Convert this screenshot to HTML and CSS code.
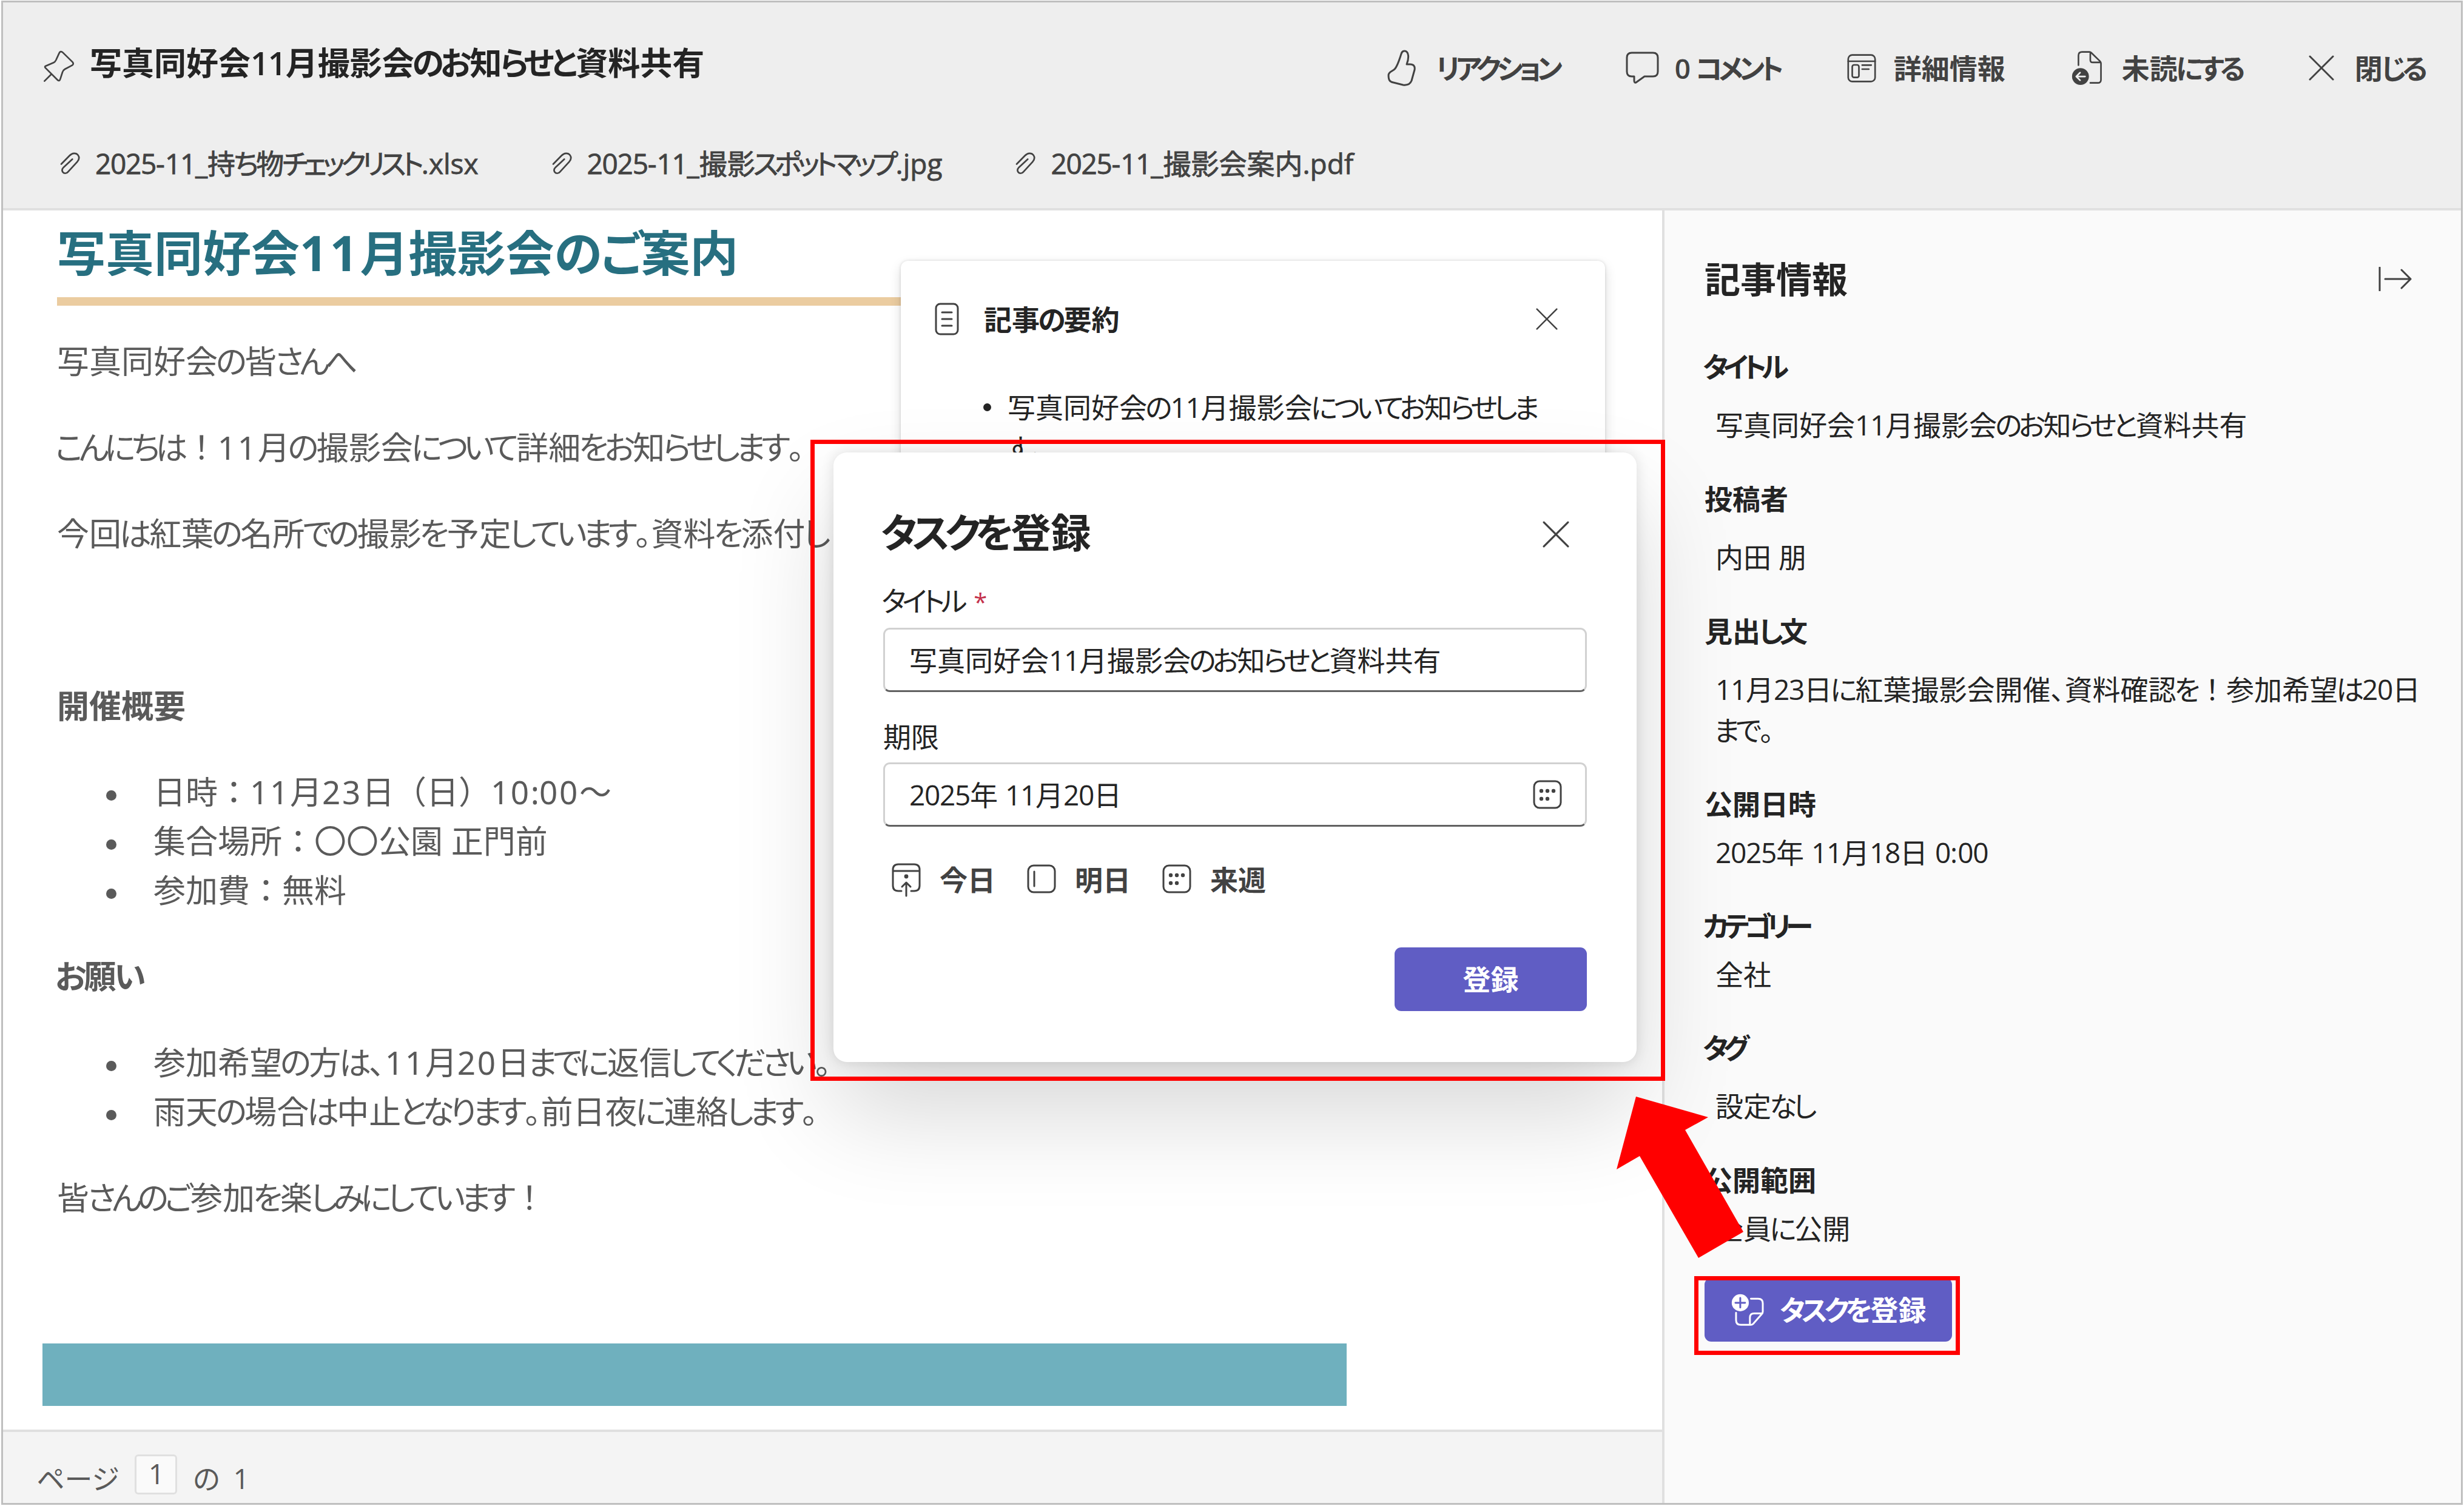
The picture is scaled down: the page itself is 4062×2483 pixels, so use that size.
FILE: index.html
```html
<!DOCTYPE html>
<html lang="ja">
<head>
    <meta charset="UTF-8">
    <meta name="viewport" content="width=device-width, initial-scale=1.0">
    <title>写真同好会11月撮影会のお知らせと資料共有</title>
    <link rel="stylesheet" href="styles.css">
</head>
<body>
    <!-- shared icons -->
    <svg class="icon-defs">
        <symbol id="clip" viewBox="118 540 98 110">
            <path d="M124 598 L164 557 C178 542 197 542 206 554 C214 565 211 577 202 587 L157 636 C149 646 137 645 131 637 C126 629 128 621 135 614 L178 574"/>
        </symbol>
        <symbol id="close" viewBox="0 0 42 42">
            <path d="M2 2 L40 40 M40 2 L2 40"/>
        </symbol>
        <symbol id="calendar" viewBox="0 0 48 48">
            <rect x="2" y="2" width="44" height="44" rx="9"/>
            <g class="dots"><circle cx="14" cy="18" r="3.2"/><circle cx="24" cy="18" r="3.2"/><circle cx="34" cy="18" r="3.2"/><circle cx="14" cy="31" r="3.2"/><circle cx="24" cy="31" r="3.2"/></g>
        </symbol>
    </svg>

    <div class="app">
        <header class="header">
            <div class="top-row">
                <svg class="icon pin" viewBox="36 38 156 156"><path d="M40 190 L75 155 M45 116 L85 99 C92 96 94 92 97 86 L113 51 C116 43 124 42 130 48 L179 96 C184 102 183 108 177 112 L141 131 C134 135 131 139 129 146 L118 180 C116 189 110 190 105 185 L46 126 C41 122 41 118 45 116 Z"/></svg>
                <h1 class="title">写真同好会11月撮影会のお知らせと資料共有</h1>
                <nav class="toolbar">
                    <button class="tool">
                        <svg class="icon like" viewBox="0 0 48 60"><path d="M28 2 C23 2 23 8 21 13 C18 22 16 27 13 31 C9 36 2 36 2 42 C2 50 4 53 10 54 L26 58 C34 59 38 56 40 51 L45 33 C46 27 43 24 38 24 H32 C36 14 36 2 28 2 Z"/></svg>
                        リアクション
                    </button>
                    <button class="tool">
                        <svg class="icon comment" viewBox="0 0 55 54"><path d="M10 2 H45 Q53 2 53 10 V33 Q53 41 45 41 H31 L17 51 Q14 52 14 48 V41 H10 Q2 41 2 33 V10 Q2 2 10 2 Z"/></svg>
                        0 コメント
                    </button>
                    <button class="tool">
                        <svg class="icon detail" viewBox="66 53 143 141"><rect x="71" y="58" width="133" height="131" rx="20"/><path d="M71 89 H204 M140 108 H185 M140 128 H173"/><rect x="91" y="107" width="33" height="62" rx="9"/></svg>
                        詳細情報
                    </button>
                    <button class="tool">
                        <svg class="icon unread" viewBox="1166 38 156 178"><path d="M1203 112 V64 Q1203 46 1221 46 H1258 Q1263 46 1267 50 L1310 92 Q1315 97 1315 102 V184 Q1315 200 1299 200 H1262 M1262 48 V86 Q1262 98 1274 98 H1313"/><circle class="solid" cx="1213" cy="168" r="44"/><path class="cut" d="M1236 168 H1194 M1211 149 L1192 168 L1211 187"/></svg>
                        未読にする
                    </button>
                    <button class="tool">
                        <svg class="icon close"><use href="#close"/></svg>
                        閉じる
                    </button>
                </nav>
            </div>
            <div class="files">
                <a class="file"><svg class="icon clip"><use href="#clip"/></svg>2025-11_持ち物チェックリスト.xlsx</a>
                <a class="file"><svg class="icon clip"><use href="#clip"/></svg>2025-11_撮影スポットマップ.jpg</a>
                <a class="file"><svg class="icon clip"><use href="#clip"/></svg>2025-11_撮影会案内.pdf</a>
            </div>
        </header>

        <div class="content">
            <main class="viewer">
                <article class="article">
                    <h2>写真同好会11月撮影会のご案内</h2>
                    <p>写真同好会の皆さんへ</p>
                    <p>こんにちは！11月の撮影会について詳細をお知らせします。</p>
                    <p>今回は紅葉の名所での撮影を予定しています。資料を添付し</p>
                    <p>&nbsp;</p>
                    <h3>開催概要</h3>
                    <ul>
                        <li>日時：11月23日（日）10:00～</li>
                        <li>集合場所：〇〇公園 正門前</li>
                        <li>参加費：無料</li>
                    </ul>
                    <h3>お願い</h3>
                    <ul>
                        <li>参加希望の方は、11月20日までに返信してください。</li>
                        <li>雨天の場合は中止となります。前日夜に連絡します。</li>
                    </ul>
                    <p>皆さんのご参加を楽しみにしています！</p>
                    <div class="band"></div>
                </article>
                <footer class="pager">
                    <span class="pager-label">ページ</span>
                    <span class="page-box">1</span>
                    <span>の</span>
                    <span class="page-total">1</span>
                </footer>
            </main>

            <aside class="sidebar">
                <div class="sidebar-head">
                    <h2>記事情報</h2>
                    <svg class="icon collapse" viewBox="0 0 56 40"><path d="M2 1 V39 M11 20 H53 M38 5 L53 20 L38 35"/></svg>
                </div>
                <dl>
                    <dt>タイトル</dt>
                    <dd class="loose">写真同好会11月撮影会のお知らせと資料共有</dd>
                    <dt>投稿者</dt>
                    <dd class="loose">内田 朋</dd>
                    <dt>見出し文</dt>
                    <dd class="loose">11月23日に紅葉撮影会開催、資料確認を！参加希望は20日<br>まで。</dd>
                    <dt>公開日時</dt>
                    <dd>2025年 11月18日 0:00</dd>
                    <dt>カテゴリー</dt>
                    <dd>全社</dd>
                    <dt>タグ</dt>
                    <dd class="loose">設定なし</dd>
                    <dt>公開範囲</dt>
                    <dd>全員に公開</dd>
                </dl>
                <button class="primary add-task">
                    <svg class="icon note" viewBox="44 64 166 166"><path d="M145 92 H181 Q204 92 204 115 V156 Q204 163 199 168 L156 217 Q151 222 144 222 H95 Q71 222 71 198 V162 M140 220 V186 Q140 165 161 165 H202"/><circle class="solid" cx="92" cy="112" r="45"/><path class="cut" d="M92 88 V136 M68 112 H116"/></svg>
                    タスクを登録
                </button>
            </aside>
        </div>

        <section class="summary">
            <div class="summary-head">
                <svg class="icon doc" viewBox="0 0 40 54"><rect x="2" y="2" width="36" height="50" rx="7"/><path d="M12 16 H28 M12 27 H28 M12 38 H28"/></svg>
                <h2>記事の要約</h2>
                <svg class="icon close"><use href="#close"/></svg>
            </div>
            <ul>
                <li>写真同好会の11月撮影会についてお知らせしま<br>す。</li>
            </ul>
        </section>

        <section class="dialog">
            <div class="dialog-head">
                <h2>タスクを登録</h2>
                <svg class="icon close"><use href="#close"/></svg>
            </div>
            <label class="label">タイトル<span class="required">*</span></label>
            <div class="input">写真同好会11月撮影会のお知らせと資料共有</div>
            <label class="label due">期限</label>
            <div class="input">2025年 11月20日<svg class="icon cal"><use href="#calendar"/></svg></div>
            <div class="quick">
                <button><svg class="icon today" viewBox="0 0 48 56"><path d="M16 46 H11 Q2 46 2 37 V11 Q2 2 11 2 H37 Q46 2 46 11 V37 Q46 46 37 46 H32 M2 13 H46 M24 54 V33 M17 39 L24 32 L31 39"/><g class="dots"><circle cx="24" cy="22" r="3.4"/></g></svg>今日</button>
                <button><svg class="icon cal" viewBox="0 0 48 48"><rect x="2" y="2" width="44" height="44" rx="9"/><path d="M12 12 V36"/></svg>明日</button>
                <button><svg class="icon cal"><use href="#calendar"/></svg>来週</button>
            </div>
            <button class="primary submit">登録</button>
        </section>

        <!-- callouts -->
        <div class="mark mark-dialog"></div>
        <div class="mark mark-button"></div>
        <svg class="arrow" viewBox="0 0 151 266"><polygon points="32,0 151,34 113,55 209,223 135,266 38,98 0,120"/></svg>
    </div>

    <script>
        // tighten kana and digits, keep full-width punctuation square
        const kinds = [
            [/^[ぁ-んァ-ヶー]+$/, 'kana'],
            [/^[0-9]+$/, 'num'],
            [/^[！：（）]+$/, 'full']
        ];
        const walker = document.createTreeWalker(document.querySelector('.app'), NodeFilter.SHOW_TEXT);
        const nodes = [];
        while (walker.nextNode()) {
            if (walker.currentNode.data.trim()) nodes.push(walker.currentNode);
        }

        nodes.forEach(node => {
            const run = document.createElement('span');
            node.data.trim().split(/([ぁ-んァ-ヶー]+|[0-9]+|[！：（）]+)/).forEach(part => {
                const kind = kinds.find(k => k[0].test(part));
                if (kind) {
                    const span = document.createElement('span');
                    span.className = kind[1];
                    span.textContent = part;
                    run.append(span);
                } else {
                    run.append(part);
                }
            });
            node.replaceWith(run);
        });
    </script>
</body>
</html>
```
FILE: styles.css
```css
* {
    box-sizing: border-box;
    margin: 0;
    padding: 0;
}

body {
    background: #fff;
    font-family: "Open Sans", "Noto Sans CJK JP", sans-serif;
    font-size: 46px;
    line-height: 67px;
    color: #242424;
    font-feature-settings: "palt";
    white-space: nowrap;
    overflow: hidden;
}

button {
    font: inherit;
    font-feature-settings: inherit;
    color: inherit;
    background: none;
    border: none;
    display: flex;
    align-items: center;
}

.kana {
    margin: 0 0.06em 0 -0.06em;
    letter-spacing: -0.13em;
}

.num { letter-spacing: -0.028em; }
.full { font-feature-settings: normal; }

.icon-defs {
    position: absolute;
    width: 0;
    height: 0;
}

.icon {
    flex: none;
    fill: none;
    stroke: #424242;
    stroke-width: 3;
    stroke-linecap: round;
    stroke-linejoin: round;
}

.dots {
    fill: #424242;
    stroke: none;
}

.app {
    position: relative;
    display: flex;
    flex-direction: column;
    width: 4058px;
    height: 2480px;
    margin: 1px 2px;
    border: 3px solid #bfbfbf;
    overflow: hidden;
}

/* header */
.header {
    height: 343px;
    background: #eee;
    border-bottom: 4px solid #e0e0e0;
}

.top-row {
    display: flex;
    align-items: flex-start;
    padding: 60px 59px 0 67px;
    line-height: 80px;
}

.pin {
    width: 52px;
    height: 52px;
    margin: 19px 24px 0 0;
    stroke-width: 8;
}

.title {
    font-size: 53px;
    font-weight: 600;
}

.title .kana { letter-spacing: -0.11em; }

.toolbar {
    display: flex;
    gap: 108px;
    margin: 8px 0 0 auto;
    font-weight: 600;
    color: #424242;
}

.toolbar .kana { letter-spacing: -0.15em; }

.like { width: 48px; height: 60px; margin-right: 35px; }
.comment { width: 55px; height: 54px; margin-right: 26px; }
.detail { width: 48px; height: 47px; margin-right: 29px; stroke-width: 8; }
.unread { width: 52px; height: 59px; margin-right: 32px; stroke-width: 8; }
.tool .close { width: 42px; height: 42px; margin-right: 34px; }

.unread .solid { fill: #424242; stroke: #eee; stroke-width: 4; }
.unread .cut { stroke: #eee; }

.files {
    display: flex;
    gap: 121px;
    padding: 87px 0 0 94px;
    line-height: 60px;
    color: #424242;
    -webkit-text-stroke: 0.8px #424242;
}

.file {
    display: flex;
    align-items: center;
}

.file .kana { letter-spacing: -0.14em; }

.clip {
    width: 33px;
    height: 37px;
    margin-right: 25px;
    stroke-width: 8;
}

/* body */
.content {
    display: flex;
    flex: 1;
}

.viewer {
    display: flex;
    flex-direction: column;
    width: 2739px;
    border-right: 4px solid #e0e0e0;
}

.article {
    flex: 1;
    padding: 19px 546px 0 89px;
    font-family: "Noto Sans", "Noto Sans CJK JP", sans-serif;
    font-size: 53px;
    line-height: 81px;
    color: #5a5a5a;
}

.article .num { letter-spacing: 0.05em; }
.article h2 .kana { letter-spacing: -0.03em; margin: 0; }

.article h2 {
    padding: 0 0 24px;
    border-bottom: 14px solid #ebcca0;
    margin-bottom: 51px;
    font-size: 80px;
    line-height: 100px;
    color: #276f80;
}

.article p,
.article h3,
.article ul {
    margin: 0 0 61px;
    font-size: 53px;
}

.article li {
    display: flex;
    align-items: center;
    padding-left: 81px;
}

.article li::before {
    content: "";
    width: 17px;
    height: 17px;
    margin: 12px 61px 0 0;
    border-radius: 50%;
    background: #5a5a5a;
}

.band {
    width: 2150px;
    height: 103px;
    margin: 200px 0 0 -24px;
    background: #6fb0be;
}

.pager {
    display: flex;
    align-items: center;
    height: 121px;
    padding: 36px 0 0 55px;
    background: #f4f4f4;
    border-top: 4px solid #e0e0e0;
    color: #5a5a5a;
}

.pager .kana { letter-spacing: 0; margin: 0; }

.page-box {
    width: 70px;
    height: 66px;
    margin: -14px 26px 0 26px;
    border: 3px solid #e0e0e0;
    border-radius: 6px;
    background: #fafafa;
    line-height: 56px;
    text-align: center;
}

.page-total { margin-left: 22px; }

/* sidebar */
.sidebar {
    flex: 1;
    padding: 71px 77px 0 66px;
    background: #fafafa;
}

.sidebar-head {
    display: flex;
    align-items: center;
    justify-content: space-between;
    height: 84px;
    padding-right: 13px;
}

.sidebar-head h2 { font-size: 59px; }
.collapse { width: 56px; height: 40px; }

dl { padding-top: 15px; }

dt {
    margin-top: 54px;
    font-weight: 600;
}

dt .kana { letter-spacing: -0.18em; }

dd { margin: 13px 0 0 18px; }
dd.loose { margin-top: 29px; }
dd.loose + dt { margin-top: 55px; }

.primary {
    justify-content: center;
    height: 105px;
    border-radius: 11px;
    background: #605dc4;
    color: #fff;
    font-weight: 600;
}

.add-task {
    width: 408px;
    margin-top: 48px;
}

.note {
    width: 55px;
    height: 55px;
    margin-right: 29px;
    stroke: #fff;
    stroke-width: 9;
}

.note .solid { fill: #fff; stroke: #605dc4; stroke-width: 5; }
.note .cut { stroke: #605dc4; }

/* summary card */
.summary {
    position: absolute;
    left: 1480px;
    top: 426px;
    width: 1161px;
    height: 700px;
    padding: 54px 78px 0 56px;
    border-radius: 12px;
    background: #fff;
    box-shadow: 0 0 5px rgba(0, 0, 0, 0.14), 0 8px 20px rgba(0, 0, 0, 0.14);
}

.summary-head {
    display: flex;
    align-items: center;
    height: 84px;
}

.summary-head h2 { font-size: 46px; }
.doc { width: 40px; height: 54px; margin-right: 41px; }
.summary .close { width: 36px; height: 36px; margin-left: auto; }

.summary ul {
    padding: 70px 0 0 120px;
    list-style: none;
}

.summary li::before {
    content: "";
    float: left;
    width: 13px;
    height: 13px;
    margin: 27px 0 0 -40px;
    border-radius: 50%;
    background: #242424;
}

/* task dialog */
.dialog {
    position: absolute;
    left: 1369px;
    top: 742px;
    width: 1324px;
    height: 1005px;
    padding: 89px 82px 0 82px;
    border-radius: 22px;
    background: #fff;
    box-shadow: 0 0 21px rgba(0, 0, 0, 0.12), 0 83px 166px rgba(0, 0, 0, 0.16);
}

.dialog-head {
    display: flex;
    align-items: center;
    justify-content: space-between;
    height: 84px;
    padding-right: 29px;
}

.dialog-head h2 { font-size: 66px; }
.dialog .close { width: 44px; height: 44px; margin-top: 8px; }

.label {
    display: block;
    margin-top: 38px;
}

.label.due { margin-top: 40px; }

.required {
    margin-left: 14px;
    color: #c4314b;
    font-size: 40px;
}

.input {
    display: flex;
    align-items: center;
    justify-content: space-between;
    height: 106px;
    margin-top: 9px;
    padding: 0 38px 0 40px;
    border: 3px solid #d1d1d1;
    border-bottom-color: #616161;
    border-radius: 11px;
}

.cal { width: 48px; height: 48px; }

.quick {
    display: flex;
    gap: 52px;
    margin: 54px 0 0 14px;
    color: #424242;
    font-weight: 600;
}

.quick .icon { margin-right: 31px; }
.quick .cal { margin-bottom: 4px; }
.today { width: 48px; height: 56px; }

.submit {
    width: 317px;
    margin: 78px 0 0 auto;
}

/* callouts */
.mark {
    position: absolute;
    border: 7px solid #f00;
}

.mark-dialog {
    left: 1331px;
    top: 721px;
    width: 1409px;
    height: 1057px;
}

.mark-button {
    left: 2788px;
    top: 2100px;
    width: 438px;
    height: 130px;
}

.arrow {
    position: absolute;
    left: 2660px;
    top: 1804px;
    width: 151px;
    height: 266px;
    fill: #f00;
    overflow: visible;
}
```
